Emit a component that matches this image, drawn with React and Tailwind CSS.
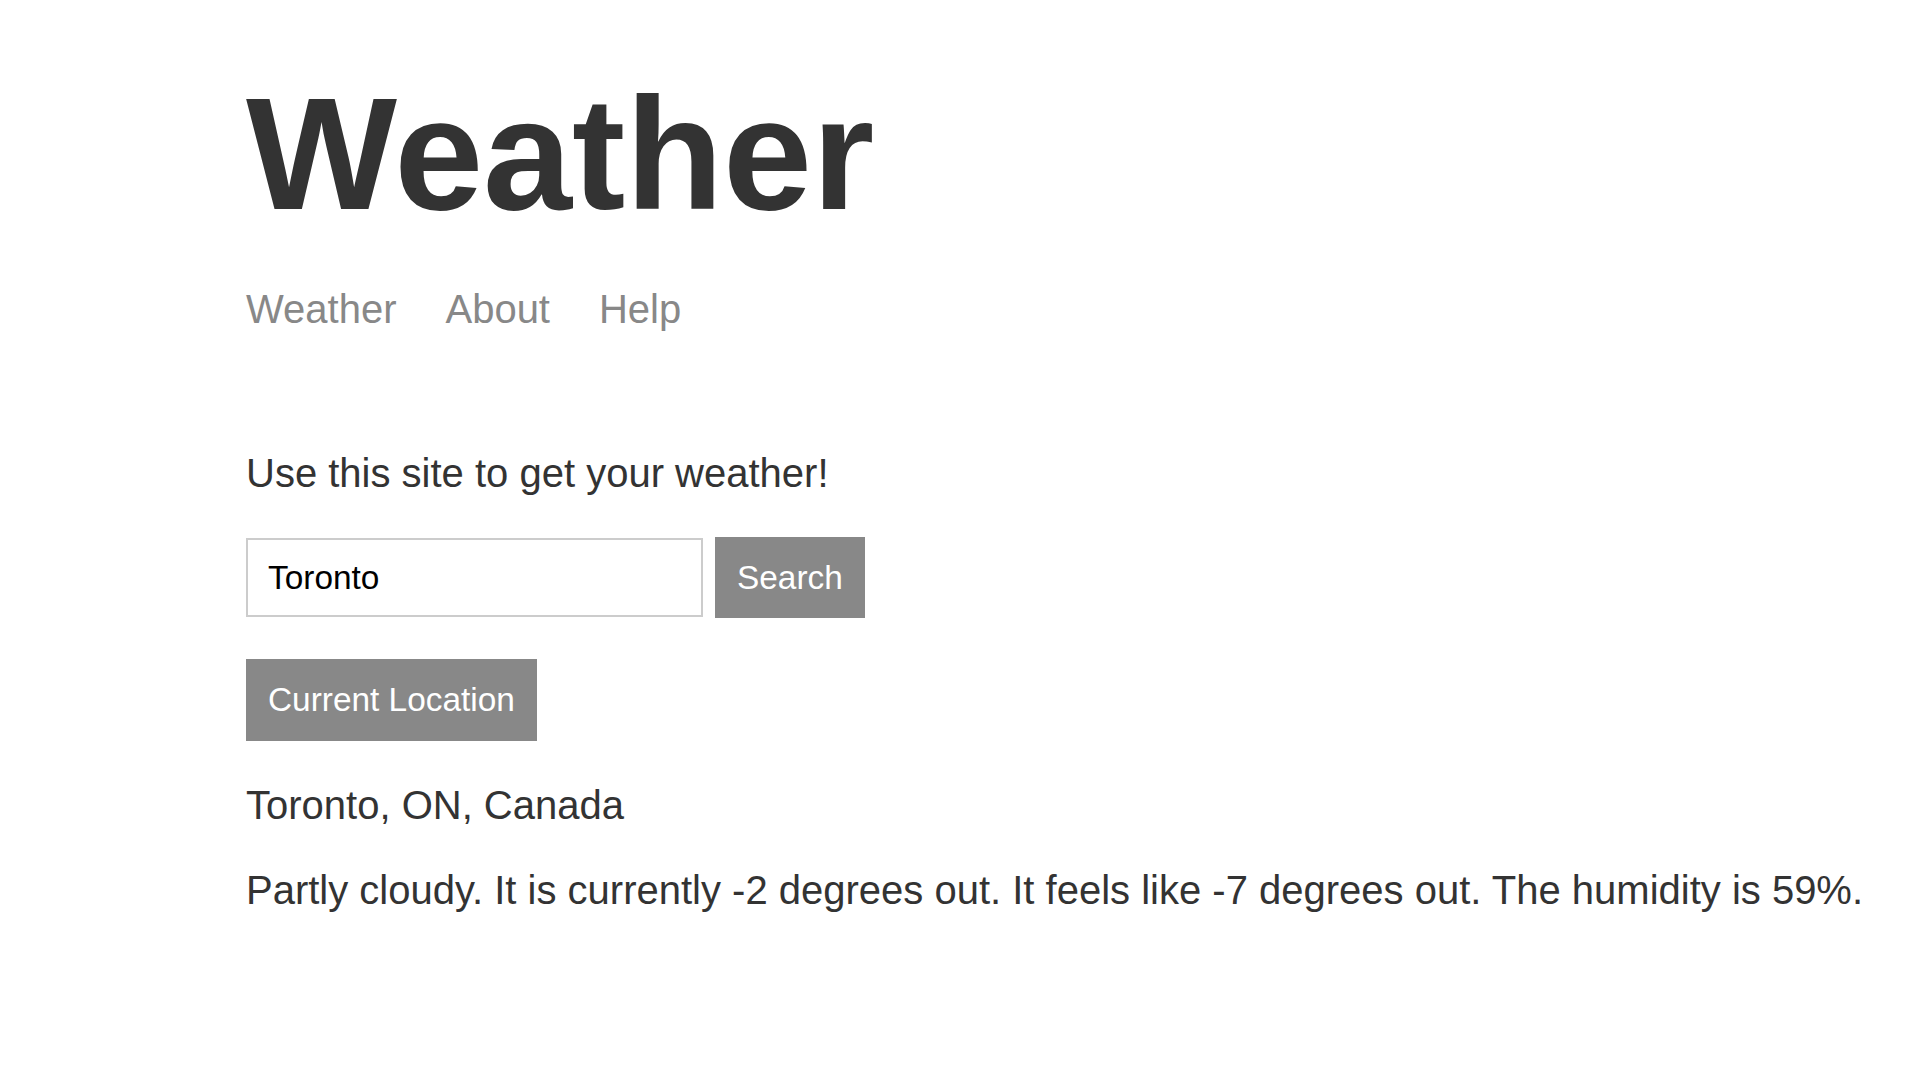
import React from "react";

export default function App() {
  return (
    <div
      className="min-h-screen bg-white pl-[246px] pt-[74px] text-[#333]"
      style={{ fontFamily: '"Liberation Sans", Arial, sans-serif' }}
    >
      <h1 className="text-[160px] font-bold leading-none text-[#333]">Weather</h1>
      <nav className="mt-[55px] flex gap-[49px] text-[40px] leading-none text-[#888]">
        <a href="#">Weather</a>
        <a href="#">About</a>
        <a href="#">Help</a>
      </nav>
      <p className="mt-[124px] text-[40px] leading-none">Use this site to get your weather!</p>
      <form className="mt-[45px] flex items-start gap-[12px]" onSubmit={(e) => e.preventDefault()}>
        <input
          type="text"
          defaultValue="Toronto"
          className="h-[79px] w-[457px] border-2 border-[#ccc] bg-white pl-[20px] text-[33.4px] text-black outline-none"
        />
        <button className="-mt-[1px] h-[81px] bg-[#888] px-[22px] text-[33.4px] leading-none text-white">
          Search
        </button>
      </form>
      <button className="mt-[41px] h-[82px] bg-[#888] px-[22px] text-[33.4px] leading-none text-white">
        Current Location
      </button>
      <p className="mt-[44px] text-[40px] leading-none">Toronto, ON, Canada</p>
      <p className="mt-[45px] text-[40px] leading-none">
        Partly cloudy. It is currently -2 degrees out. It feels like -7 degrees out. The humidity is 59%.
      </p>
    </div>
  );
}
